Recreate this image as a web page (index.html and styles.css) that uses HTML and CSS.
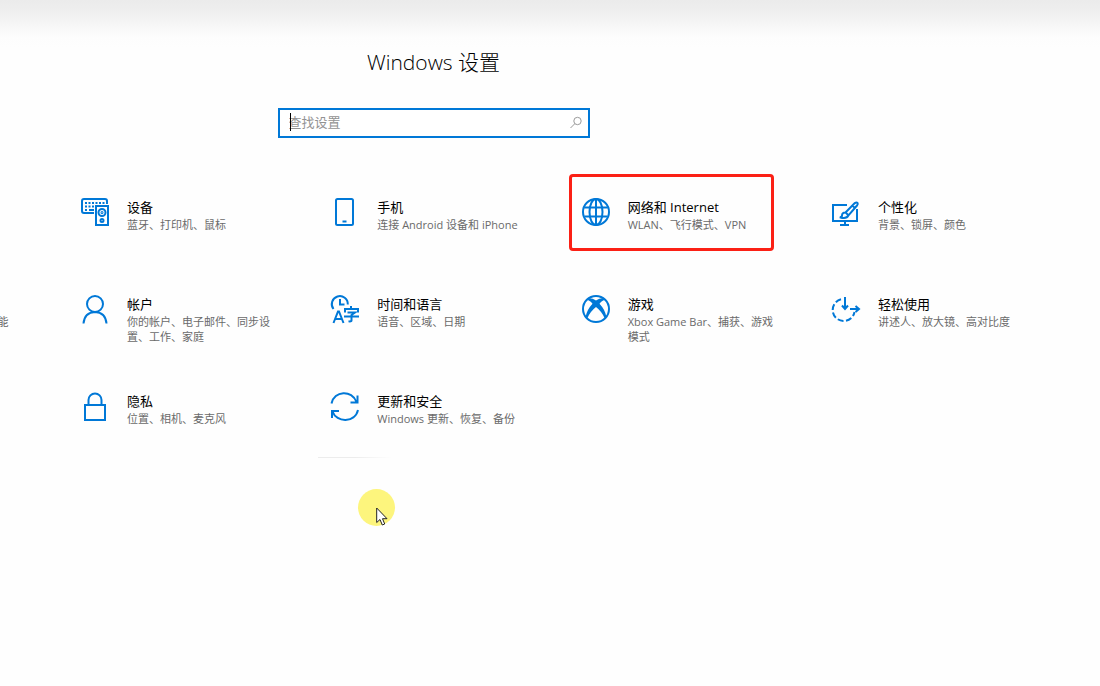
FILE: index.html
```html
<!DOCTYPE html>
<html lang="zh-CN">
<head>
<meta charset="utf-8">
<title>Windows 设置</title>
<link rel="stylesheet" href="styles.css">
</head>
<body>
<main class="settings">
  <h1 class="title">Windows 设置</h1>
  <form class="search">
    <input class="search-input" type="text" placeholder="查找设置" aria-label="查找设置">
    <span class="caret"></span>
    <button class="search-button" type="button" aria-label="搜索">
      <svg width="14" height="14" viewBox="0 0 14 14" fill="none" stroke="#9a9a9a"><circle cx="8.5" cy="5" r="3.7"/><path d="M5.8 7.7 1.5 12"/></svg>
    </button>
  </form>
  <nav class="grid">
    <a class="tile second" href="#devices">
      <svg class="icon" viewBox="0 0 28 28">
        <path d="M13 15H3Q1 15 1 13V3Q1 1 3 1H24Q26 1 26 3V6"/>
        <path d="M4 5H24" stroke-dasharray="2 1.5"/><path d="M4 8.5H15" stroke-dasharray="2 1.5"/><path d="M4 12H6M8 12H13"/>
        <path d="M15 8H27V27H15Z"/><circle cx="21" cy="14.5" r="3.5"/><circle cx="21" cy="14.5" r=".5"/><circle cx="21" cy="22.5" r="1.5"/>
      </svg>
      <span class="text"><span class="name">设备</span><span class="note">蓝牙、打印机、鼠标</span></span>
    </a>
    <a class="tile" href="#phone">
      <svg class="icon" viewBox="0 0 28 28">
        <rect x="5" y="1" width="17" height="26" rx="1.5"/><path d="M11.5 23.5H15.5"/>
      </svg>
      <span class="text"><span class="name">手机</span><span class="note">连接 Android 设备和 iPhone</span></span>
    </a>
    <a class="tile marked" href="#network">
      <svg class="icon" viewBox="0 0 28 28">
        <circle cx="14" cy="14" r="13"/><ellipse cx="14" cy="14" rx="6.5" ry="13"/><path d="M14 1V27M2.5 9.5H25.5M2.5 18.5H25.5"/>
      </svg>
      <span class="text"><span class="name">网络和 Internet</span><span class="note">WLAN、飞行模式、VPN</span></span>
    </a>
    <a class="tile" href="#personal">
      <svg class="icon" viewBox="0 0 28 28">
        <path d="M15 7H1V23H25V11M13 23V27M8 27H17"/>
        <path d="M13.500 14.500 22.800 5.100Q24.500 3.800 25.500 5Q26.300 6 25 7.500L16.500 17.300ZM13.500 14.500Q10 14.300 10 17.500Q10 19.200 7.800 19.200Q14.500 21.500 16.500 17.300M20.500 7.800 23 10"/>
      </svg>
      <span class="text"><span class="name">个性化</span><span class="note">背景、锁屏、颜色</span></span>
    </a>

    <a class="tile" href="#apps">
      <span class="icon"></span>
      <span class="text"><span class="name">应用</span><span class="note">卸载、默认应用、可选功能</span></span>
    </a>
    <a class="tile" href="#accounts">
      <svg class="icon" viewBox="0 0 28 28">
        <circle cx="14" cy="9" r="8"/><path d="M2.500 28.500Q3.500 17.500 14 17Q24.500 17.500 25.500 28.500"/>
      </svg>
      <span class="text"><span class="name">帐户</span><span class="note">你的帐户、电子邮件、同步设置、工作、家庭</span></span>
    </a>
    <a class="tile" href="#time">
      <svg class="icon" viewBox="0 0 28 28">
        <path d="M2.5 14A8 8 0 1 1 16.8 9.5M9 4V9.5H13.5"/>
        <path d="M2.5 28 7 16.500H8L12.500 28M4.500 24H10.500"/>
        <path d="M20 11V14M14 17.500V14H27V17.500M16.500 17.500H24L20.500 20V25.500Q20.500 26.700 17.500 26.300M13 21.500H28"/>
      </svg>
      <span class="text"><span class="name">时间和语言</span><span class="note">语音、区域、日期</span></span>
    </a>
    <a class="tile" href="#gaming">
      <svg class="icon" viewBox="0 0 28 28">
        <circle cx="14" cy="14" r="13"/>
        <path class="solid" d="M6 3.5Q9.5 2.5 14 5.5Q18.5 2.5 22 3.5L23 5Q20.5 5 17.5 8.7Q23 14.5 24.5 22L23 24Q20 16.5 14 12Q8 16.5 5 24L3.5 22Q5 14.5 10.5 8.7Q7.5 5 5 5Z"/>
      </svg>
      <span class="text"><span class="name">游戏</span><span class="note">Xbox Game Bar、捕获、游戏模式</span></span>
    </a>
    <a class="tile" href="#ease">
      <svg class="icon" viewBox="0 0 28 28">
        <path d="M9 4.300A11 11 0 1 0 22.500 17" stroke-dasharray="6 2.5"/>
        <path d="M13 2V13M10 10.500 13 14 16 10.500M18 14H26M23.500 11 27 14 23.500 17"/>
      </svg>
      <span class="text"><span class="name">轻松使用</span><span class="note">讲述人、放大镜、高对比度</span></span>
    </a>

    <a class="tile second" href="#privacy">
      <svg class="icon" viewBox="0 0 28 28">
        <rect x="4" y="13" width="20" height="15"/><path d="M7.500 13V8A6.500 6.500 0 0 1 20.500 8V13"/>
      </svg>
      <span class="text"><span class="name">隐私</span><span class="note">位置、相机、麦克风</span></span>
    </a>
    <a class="tile" href="#update">
      <svg class="icon" viewBox="0 0 28 28">
        <path d="M.5 11.500C3 -1.500 21 -2.500 25.500 10M26.500 3.500V10.500H19.500M27 18C24 31 5.500 31 1.500 19.500M1 26V19H8"/>
      </svg>
      <span class="text"><span class="name">更新和安全</span><span class="note">Windows 更新、恢复、备份</span></span>
    </a>
  </nav>
</main>
<div class="hairline"></div>
<div class="pointer">
  <svg width="13" height="20" viewBox="0 0 13 20"><path d="M.7 1V15.500L4 12.500 6.300 18 8.700 17 6.500 11.700H11Z" fill="#fff" stroke="#222"/></svg>
</div>
</body>
</html>
```
FILE: styles.css
```css
*, *::before, *::after { box-sizing: border-box; }

body {
  margin: 0;
  min-height: 100vh;
  overflow: hidden;
  position: relative;
  background: #fefefe linear-gradient(#ebebeb 0, #eeeeee 10px, #fdfdfd 37px, #fefefe 48px) no-repeat;
  font-family: "Open Sans", "Noto Sans CJK SC", sans-serif;
  color: #000;
}

/* The pane continues past the left edge of the window. */
.settings {
  margin-left: -233px;
  padding-top: 47px;
  display: flex;
  flex-direction: column;
  align-items: center;
}

.title {
  margin: 0;
  font-size: 21px;
  line-height: 30px;
  font-weight: 300;
}

.search {
  position: relative;
  display: flex;
  align-items: center;
  width: 312px;
  height: 30px;
  margin-top: 31px;
  border: 2px solid #0078d7;
  background: #fff;
}

.search-input {
  flex: 1;
  min-width: 0;
  height: 100%;
  padding: 0 9px 2px;
  border: 0;
  outline: 0;
  background: none;
  font: inherit;
  font-size: 13px;
}

.search-input::placeholder { color: #929292; }

.caret {
  position: absolute;
  left: 10px;
  top: 3px;
  width: 1px;
  height: 18px;
  background: #000;
}

.search-button {
  display: flex;
  margin-right: 5px;
  padding: 0;
  border: 0;
  background: none;
}

.grid {
  display: grid;
  grid-template-columns: repeat(5, 1fr);
  grid-auto-rows: minmax(97px, auto);
  width: 1252px;
  margin-top: 60px;
}

.tile {
  position: relative;
  display: flex;
  align-items: flex-start;
  gap: 18px;
  padding: 0 28px 0 23px;
  color: inherit;
  text-decoration: none;
}

.second { grid-column-start: 2; }

.icon {
  flex: none;
  width: 28px;
  height: 28px;
  overflow: visible;
  fill: none;
  stroke: #0078d7;
  stroke-width: 2;
}

.solid {
  fill: #0078d7;
  stroke: none;
}

.text {
  display: flex;
  flex-direction: column;
}

.name {
  font-size: 13px;
  line-height: 19px;
}

.note {
  font-size: 11px;
  line-height: 15px;
  color: #6a6a6a;
}

.marked::after {
  content: "";
  position: absolute;
  left: 10px;
  top: -24px;
  width: 205px;
  height: 77px;
  border: 3px solid #fb2015;
  border-radius: 4px;
}

.hairline {
  position: absolute;
  left: 318px;
  top: 457px;
  width: 74px;
  height: 1px;
  background: linear-gradient(90deg, #ececec 50%, #fefefe);
}

.pointer {
  position: absolute;
  left: 358px;
  top: 489px;
  width: 37px;
  height: 37px;
  border-radius: 50%;
  background: #fdf57d;
}

.pointer svg {
  position: absolute;
  left: 18px;
  top: 18px;
}
```
